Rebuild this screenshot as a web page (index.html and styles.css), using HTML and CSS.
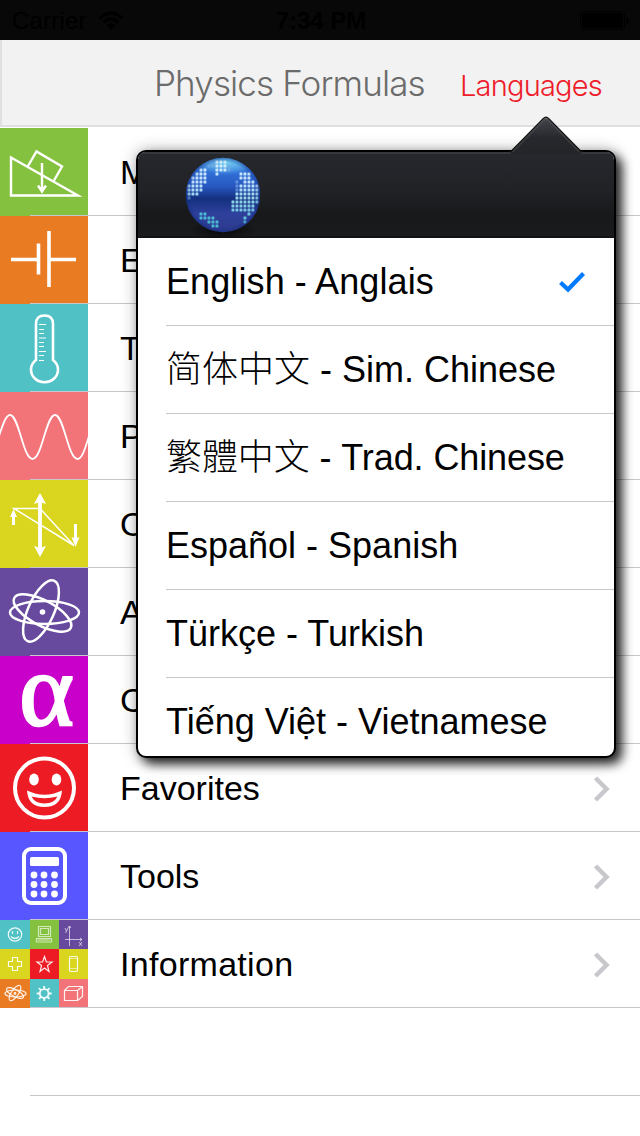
FILE: index.html
```html
<!DOCTYPE html>
<html lang="en">
<head>
<meta charset="utf-8">
<title>Physics Formulas</title>
<link rel="stylesheet" href="styles.css">
</head>
<body>
<div class="screen">
  <header class="status">
    <div class="status-left"><span class="carrier">Carrier</span>
      <svg width="26" height="20" viewBox="0 0 26 20"><g fill="none" stroke="#000" stroke-width="3.4"><path d="M1.5 7.5Q13-3.5 24.500 7.500"/><path d="M5.500 11.500Q13 4.500 20.500 11.500"/></g><path d="M8.500 14.500Q13 10.500 17.500 14.500L13 19z"/></svg>
    </div>
    <span class="time">7:34 PM</span>
    <svg class="battery" width="50" height="20" viewBox="0 0 50 20"><rect x=".5" y=".5" width="44" height="18" rx="3" fill="none" stroke="#000"/><rect x="2" y="2" width="41" height="15" rx="2"/><path d="M46 6q3 0 3 3.500t-3 3.500z"/></svg>
  </header>
  <nav class="navbar">
    <h1 class="title">Physics Formulas</h1>
    <span class="languages">Languages</span>
  </nav>
  <main class="list">
    <div class="row"><svg class="tile green" viewBox="0 0 88 88"><g fill="none" stroke="#fff" stroke-width="2.400"><path d="M11 29.500V67.500H78zM28 38l8.500-14.500L62 38.500l-8 14M42 35V63M38 57.500l4 6 4-6"/></g></svg><span class="label">M</span></div>
    <div class="row"><svg class="tile orange" viewBox="0 0 88 88"><path d="M11 43.500h27M49 43.500h27M38.500 27.500V58.500M49 15V71" fill="none" stroke="#fff" stroke-width="3.600"/></svg><span class="label">E</span></div>
    <div class="row"><svg class="tile teal" viewBox="0 0 88 88"><path d="M36 56V20q0-8.500 8.500-8.500T53 20V56A13.500 12.500 0 1 1 36 56z" fill="none" stroke="#fff" stroke-width="2.600"/><path d="M39 20.500h7M39 25.500h5M39 29.500h5M39 34h7M39 38.500h5M39 42.500h5M39 47.500h7M39 51.500h5M39 56.500h5" stroke="#fff" stroke-width="1.200"/></svg><span class="label">T</span></div>
    <div class="row"><svg class="tile pink" viewBox="0 0 88 88"><path d="M-1 44C3 32 6 23 10 23C19 23 23 67 32.500 67C42 67 46 23 55 23C64 23 68 67 77.500 67C82 67 85 57 89 44" fill="none" stroke="#fff" stroke-width="1.800"/></svg><span class="label">P</span></div>
    <div class="row"><svg class="tile yellow" viewBox="0 0 88 88"><g fill="none" stroke="#fff"><path d="M14 28.500H40L74 65.500z" stroke-width="1.500"/><path d="M40 20V70" stroke-width="3.800"/><path d="M13.500 45V34M75.500 44v15" stroke-width="3"/></g><path d="M40 13l6 11-6-2-6 2zM40 77l-6-11 6 2 6-2zM13.500 29l3.500 8H10zM75.500 67l-4-10 4 1.500 4-1.500z" fill="#fff"/></svg><span class="label">O</span></div>
    <div class="row"><svg class="tile violet" viewBox="0 0 88 88"><g fill="none" stroke="#fff" stroke-width="2.500"><ellipse cx="44.500" cy="44.500" rx="34.500" ry="11.500"/><ellipse cx="41" cy="43" rx="33" ry="13" transform="rotate(-66 41 43)"/><ellipse cx="42.500" cy="45" rx="32" ry="12.500" transform="rotate(28 42.500 45)"/></g><circle cx="42.500" cy="44" r="2.800" fill="#fff"/></svg><span class="label">A</span></div>
    <div class="row"><div class="tile magenta alpha">α</div><span class="label">C</span></div>
    <div class="row"><svg class="tile red" viewBox="0 0 88 88"><circle cx="44.500" cy="44" r="29.500" fill="none" stroke="#fff" stroke-width="4"/><ellipse cx="34" cy="35.500" rx="4.800" ry="6" fill="#fff"/><ellipse cx="56.500" cy="35.500" rx="4.800" ry="6" fill="#fff"/><path d="M27 46.500Q44.500 55 62 46.500Q61 63 44.500 63T27 46.500zM31.500 52.500Q35 59.500 44.500 59.500T57.500 52.500Q44.500 56 31.500 52.500z" fill="#fff" fill-rule="evenodd"/></svg><span class="label">Favorites</span><svg class="chevron" viewBox="0 0 18 26"><path d="M2.500 2L13.500 13 2.500 24"/></svg></div>
    <div class="row"><svg class="tile blue" viewBox="0 0 88 88"><rect x="24" y="17" width="41" height="54" rx="7" fill="none" stroke="#fff" stroke-width="4"/><rect x="30" y="25" width="29" height="9" rx="1.500" fill="#fff"/><g fill="#fff"><circle cx="34" cy="43" r="3.400"/><circle cx="44" cy="43" r="3.400"/><circle cx="54.500" cy="43" r="3.400"/><circle cx="34" cy="52.500" r="3.400"/><circle cx="44" cy="52.500" r="3.400"/><circle cx="54.500" cy="52.500" r="3.400"/><circle cx="34" cy="62" r="3.400"/><circle cx="44" cy="62" r="3.400"/><circle cx="54.500" cy="62" r="3.400"/></g></svg><span class="label">Tools</span><svg class="chevron" viewBox="0 0 18 26"><path d="M2.500 2L13.500 13 2.500 24"/></svg></div>
    <div class="row"><svg class="tile" viewBox="0 0 88 88">
      <path d="M0 0h30v29H0zM30 59h29v29H30z" fill="#50c1c4"/><path d="M30 0h29v29H30z" fill="#84c13e"/><path d="M59 0h29v29H59z" fill="#674a9e"/><path d="M0 29h30v30H0zM59 29h29v30H59z" fill="#dad61f"/><path d="M30 29h29v30H30z" fill="#ed1c24"/><path d="M0 59h30v29H0z" fill="#e97b23"/><path d="M59 59h29v29H59z" fill="#f27479"/>
      <g fill="none" stroke="#fff" stroke-width="1.200" stroke-opacity=".9">
        <circle cx="15" cy="14.500" r="6.700"/><path d="M11 16.500q4 4 8 0M12.500 11v3M17.500 11v3"/>
        <path d="M38.500 6.500h12v10h-12zM40.500 8.500h8v6h-8zM36.500 18.500h15v3.500h-15zM38 20h12" stroke-opacity=".65"/>
        <path d="M69.500 6v20M65 19.500h17M68 8l1.500-2 1.500 2M80 18l2 1.500-2 1.500M65 8l1.500 3M68 8l-2.500 5M79 22l3 4M82 22l-3 4" stroke-width=".9" stroke-opacity=".7"/>
        <path d="M12.500 37.500h5v4h4v5h-4v4h-5v-4h-4v-5h4z"/>
        <path d="M44.500 36.500l1.900 5.500H52l-4.500 3.500L49 51.500l-4.500-3.500-4.500 3.500 1.500-6L37 42h5.600z"/>
        <rect x="69.500" y="36.500" width="8" height="15" rx="1.500"/><path d="M70 48.500h7M70 38.500h7" stroke-width=".6"/>
        <ellipse cx="15.500" cy="73.500" rx="10.500" ry="3.500"/><ellipse cx="15" cy="73" rx="9.500" ry="3.500" transform="rotate(28 15 73)"/><ellipse cx="15" cy="73" rx="9" ry="3.500" transform="rotate(-55 15 73)"/><circle cx="15" cy="73.500" r=".8"/>
        <circle cx="44.200" cy="73.500" r="4.400" stroke-width="1.900"/>
        <path d="M44.200 66v3M44.200 78v3M36.700 73.500h3M48.700 73.500h3M38.900 68.200l2 2M47.500 76.800l2 2M38.900 78.800l2-2M47.500 70.200l2-2" stroke-width="1.900"/>
        <path d="M64.500 70.500h13v10h-13zM64.500 70.500l4-4h14v10l-5 4M77.500 70.500l5-4"/>
      </g></svg><span class="label info">Information</span><svg class="chevron" viewBox="0 0 18 26"><path d="M2.500 2L13.500 13 2.500 24"/></svg></div>
    <div class="row"></div>
  </main>

  <section class="popover">
    <svg class="arrow" viewBox="0 0 74 38"><defs><linearGradient id="ag" x2="0" y2="1"><stop offset="0" stop-color="#43454b"/><stop offset=".55" stop-color="#26282d"/><stop offset="1" stop-color="#232529"/></linearGradient></defs><path d="M2 36L34.500 3.500Q37 1 39.500 3.500L72 36v2H2z" fill="url(#ag)"/><path d="M0 35.500H2L34.500 2.500Q37 0 39.500 2.500L72 35.500H74" fill="none" stroke="#111" stroke-width="1.500"/><path d="M3.500 36L35 4.500Q37 2.500 39 4.500L70.500 36" fill="none" stroke="#55575b" stroke-width=".8"/></svg>
    <div class="panel">
      <div class="panel-head">
        <svg class="globe" viewBox="0 0 80 82">
          <defs>
            <linearGradient id="sea" x2="0" y2="1"><stop offset="0" stop-color="#4d9fe4"/><stop offset=".18" stop-color="#3272d8"/><stop offset=".38" stop-color="#2858c2"/><stop offset=".55" stop-color="#14307f"/><stop offset=".75" stop-color="#2f419d"/><stop offset="1" stop-color="#2c3a8c"/></linearGradient>
            <radialGradient id="rim"><stop offset=".88" stop-color="#0a2373" stop-opacity="0"/><stop offset="1" stop-color="#0b2b83" stop-opacity=".45"/></radialGradient>
            <radialGradient id="glow"><stop offset="0" stop-color="#7edcf7" stop-opacity=".8"/><stop offset="1" stop-color="#7edcf7" stop-opacity="0"/></radialGradient>
            <radialGradient id="drop"><stop offset="0" stop-opacity=".7"/><stop offset="1" stop-opacity="0"/></radialGradient>
            <linearGradient id="land" gradientUnits="userSpaceOnUse" x1="0" y1="0" x2="0" y2="76"><stop offset="0" stop-color="#d8f4ff"/><stop offset=".35" stop-color="#c1e0fa"/><stop offset=".6" stop-color="#8cd2e8"/><stop offset="1" stop-color="#43b3cf"/></linearGradient>
            <pattern id="dots" width="4" height="4" patternUnits="userSpaceOnUse"><rect x=".5" y=".5" width="2.900" height="2.900" rx=".5" fill="#fff"/></pattern>
            <mask id="grid"><rect width="80" height="84" fill="url(#dots)"/></mask>
            <clipPath id="ball"><circle cx="40" cy="39" r="36.900"/></clipPath>
          </defs>
          <ellipse cx="40" cy="74" rx="34" ry="10" fill="url(#drop)"/>
          <circle cx="40" cy="39" r="37.200" fill="url(#sea)"/>
          <g clip-path="url(#ball)"><ellipse cx="43" cy="7" rx="29" ry="12" fill="url(#glow)"/>
          <g mask="url(#grid)"><path d="M36 4h8v12h-8v4h-4V4zM16 12h8v16h-4v8h-4v4H4V28h4v-8h4v-4h4zM56 16h12v8h4v4h4v20h-4v8h-4v4h-4v8h-4v-8h4v-4H48V44h4v-8h4v-8h4v-4h-4z" fill="url(#land)"/><path d="M16 56h4v0h4v4h8v4h4v8h-8v-4h-4v-4h-8z" fill="#4bb9d3"/><path d="M52 24h4v12h-4zM44 8h4v8h-4zM28 4h4v8h-4zM24 8h4v4h-4zM4 40h4v4H4z" fill="#76a9e4" opacity=".7"/></g></g>
          <circle cx="40" cy="39" r="37.200" fill="url(#rim)"/>
        </svg>
      </div>
      <div class="option english"><span>English - Anglais</span><svg class="check" viewBox="0 0 28 22"><path d="M2.500 11.500L10 18.500 25.500 2.500"/></svg></div>
      <div class="option simplified"><span>简体中文 - Sim. Chinese</span></div>
      <div class="option traditional"><span>繁體中文 - Trad. Chinese</span></div>
      <div class="option"><span>Español - Spanish</span></div>
      <div class="option"><span>Türkçe - Turkish</span></div>
      <div class="option"><span>Tiếng Việt - Vietnamese</span></div>
    </div>
  </section>
</div>
</body>
</html>
```
FILE: styles.css
```css
* { box-sizing: border-box; }
body { margin: 0; background: #fff; }
.screen {
  position: relative;
  width: 640px;
  height: 1136px;
  overflow: hidden;
  background: #fff;
  font-family: "Liberation Sans", "Noto Sans CJK SC", sans-serif;
  color: #000;
}
svg { display: block; flex: none; }
.status {
  display: grid;
  grid-template-columns: 1fr auto 1fr;
  align-items: center;
  height: 40px;
  padding: 0 10px 0 12px;
  background: #080808;
  font-size: 24px;
}
.status-left { display: flex; align-items: center; gap: 11px; }
.carrier { letter-spacing: 0.2px; line-height: 42px; }
.time { font-weight: bold; line-height: 42px; }
.battery { justify-self: end; }
.navbar {
  display: flex;
  height: 87px;
  padding-left: 152px;
  background: #f2f2f2;
  border-left: 2px solid #e0e0e0;
  border-bottom: 2px solid #e0e0e0;
}
.title, .languages {
  margin: 0;
  font-family: Inter, "Liberation Sans", sans-serif;
  font-weight: 300;
  white-space: nowrap;
}
.title { width: 306px; font-size: 35px; line-height: 86px; letter-spacing: -0.87px; color: #6b6b6b; }
.languages { font-size: 29px; line-height: 92px; letter-spacing: -0.8px; color: #ee1c2b; }
.list { margin-top: 1px; }
.row { position: relative; display: flex; align-items: center; height: 88px; }
.row::after {
  content: "";
  position: absolute;
  left: 30px;
  right: 0;
  bottom: 0;
  height: 1px;
  background: #c8c7cc;
}
.tile { flex: none; width: 88px; height: 88px; }
.green { background: #84c13e; }
.orange { background: #e97b23; }
.teal { background: #50c1c4; }
.pink { background: #f27479; }
.yellow { background: #dad61f; }
.violet { background: #674a9e; }
.magenta { background: #c900c9; }
.red { background: #ed1c24; }
.blue { background: #5856ff; }
.alpha {
  padding-left: 5px;
  text-align: center;
  font: 104px/67px "Liberation Serif", serif;
  -webkit-text-stroke: 2.5px #fff;
  color: #fff;
}
.label { margin: 0 auto 0 32px; font-size: 34px; line-height: 88px; }
.info { letter-spacing: 0.3px; }
.chevron { width: 18px; height: 26px; margin: 1px 29px 0 0; }
.chevron path { fill: none; stroke: #c7c7cc; stroke-width: 4.5; }
.popover { position: absolute; left: 136px; top: 150px; width: 480px; height: 608px; }
.arrow { position: absolute; z-index: 1; left: 373px; top: -34px; width: 74px; height: 38px; }
.panel {
  height: 608px;
  overflow: hidden;
  border: 2px solid #000;
  border-radius: 10px;
  background: #fff;
  box-shadow: 6px 6px 11px rgba(0,0,0,.85), 0 0 16px rgba(0,0,0,.28);
}
.panel-head {
  height: 86px;
  padding: 4px 0 0 45px;
  background: linear-gradient(#26282d, #202226 45%, #17181a 75%, #1a1b1d);
  box-shadow: inset 0 2px #36383d, inset 0 -2px #131315;
}
.globe { width: 80px; height: 82px; }
.option {
  display: flex;
  align-items: center;
  justify-content: space-between;
  height: 88px;
  margin-left: 28px;
  padding-right: 28px;
  border-bottom: 1px solid #c8c7cc;
  font-size: 36px;
  line-height: 87px;
  white-space: nowrap;
}
.english { letter-spacing: 0.1px; }
.simplified, .traditional { font-weight: 300; }
.traditional { font-family: "Liberation Sans", "Noto Sans CJK TC", sans-serif; letter-spacing: -0.1px; }
.check { width: 28px; height: 22px; margin-top: 1px; }
.check path { fill: none; stroke: #007aff; stroke-width: 4.2; }
```
